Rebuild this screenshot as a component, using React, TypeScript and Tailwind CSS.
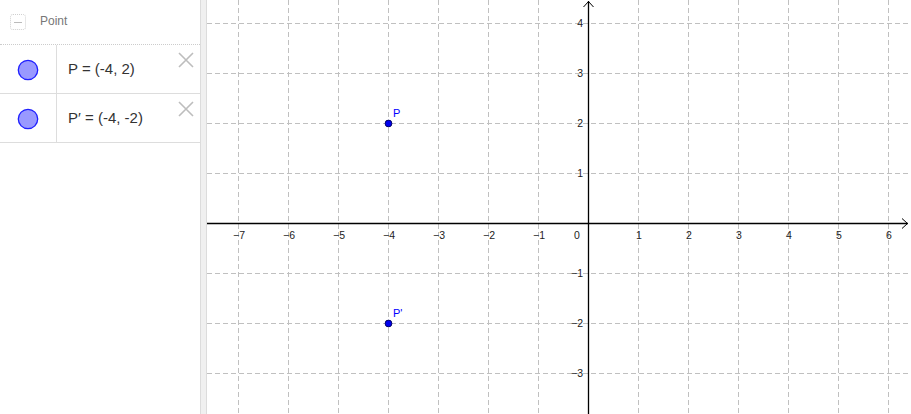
import React from "react";

const W = 704;
const H = 414;
const OX = 381; // origin x in svg coords (588 - 207)
const OY = 223;
const U = 50;

function Graph() {
  const xs: number[] = [];
  for (let k = -7; k <= 6; k++) xs.push(k);
  const ys: number[] = [];
  for (let k = -3; k <= 4; k++) ys.push(k);
  const lab = (n: number) => (n < 0 ? "\u2212" + Math.abs(n) : String(n));
  return (
    <svg width={W} height={H} viewBox={`0 0 ${W} ${H}`} className="block" style={{ fontFamily: "'Liberation Sans', Arial, sans-serif" }}>
      <rect x={0} y={0} width={W} height={H} fill="#ffffff" />
      {xs.filter((k) => k !== 0).map((k) => (
        <line key={"gx" + k} x1={OX + k * U + 0.5} y1={0} x2={OX + k * U + 0.5} y2={H} stroke="#c0c0c0" strokeWidth={1} strokeDasharray="5 3" />
      ))}
      {ys.filter((k) => k !== 0).map((k) => (
        <line key={"gy" + k} x1={0} y1={OY - k * U + 0.5} x2={W} y2={OY - k * U + 0.5} stroke="#c0c0c0" strokeWidth={1} strokeDasharray="5 3" />
      ))}
      {/* axes */}
      <line x1={0} y1={OY + 0.5} x2={W - 3} y2={OY + 0.5} stroke="#000" strokeWidth={1.3} />
      <line x1={OX + 0.5} y1={1} x2={OX + 0.5} y2={H} stroke="#000" strokeWidth={1.3} />
      <polyline points={`${W - 9},${OY - 4.5} ${W - 3.5},${OY + 0.5} ${W - 9},${OY + 5.5}`} fill="none" stroke="#000" strokeWidth={1} />
      <polyline points={`${OX - 4.5},${7} ${OX + 0.5},${1.5} ${OX + 5.5},${7}`} fill="none" stroke="#000" strokeWidth={1} />
      {/* x labels */}
      {xs.filter((k) => k !== 0).map((k) => (
        <text key={"lx" + k} x={OX + k * U + 1} y={OY + 16} fontSize={10.5} fill="#222" textAnchor="middle">
          {lab(k)}
        </text>
      ))}
      <text x={OX - 11} y={OY + 16} fontSize={10.5} fill="#222" textAnchor="middle">0</text>
      {/* y labels */}
      {ys.filter((k) => k !== 0).map((k) => (
        <text key={"ly" + k} x={OX - 5} y={OY - k * U + 4} fontSize={10.5} fill="#222" textAnchor="end">
          {lab(k)}
        </text>
      ))}
      {/* points */}
      <circle cx={OX - 4 * U + 0.5} cy={OY - 2 * U + 0.5} r={3.4} fill="#0000ee" stroke="#000055" strokeWidth={0.9} />
      <text x={OX - 4 * U + 5} y={OY - 2 * U - 6} fontSize={11} fill="#0000ff">P</text>
      <circle cx={OX - 4 * U + 0.5} cy={OY + 2 * U + 0.5} r={3.4} fill="#0000ee" stroke="#000055" strokeWidth={0.9} />
      <text x={OX - 4 * U + 5} y={OY + 2 * U - 6} fontSize={11} fill="#0000ff">P'</text>
    </svg>
  );
}

function XIcon() {
  return (
    <svg width="18" height="18" viewBox="0 0 18 18" className="block">
      <path d="M2 2 L16 16 M16 2 L2 16" stroke="#bdbdbd" strokeWidth="1.6" fill="none" />
    </svg>
  );
}

function Dot() {
  return (
    <svg width="22" height="22" viewBox="0 0 22 22" className="block">
      <circle cx="11" cy="11" r="9.7" fill="#9999ff" stroke="#1f1fff" strokeWidth="1.3" />
    </svg>
  );
}

function Row({ label }: { label: string }) {
  return (
    <div className="flex h-[49px] border-b border-[#dddddd]">
      <div className="w-[57px] flex items-center justify-center border-r border-[#dddddd] pt-[1px]">
        <Dot />
      </div>
      <div className="flex-1 relative flex items-center pl-[11px] text-[15px] text-[#333333] pt-[1px]">
        <span>{label}</span>
        <div className="absolute right-[5px] top-[6px]">
          <XIcon />
        </div>
      </div>
    </div>
  );
}

export default function App() {
  return (
    <div className="flex w-[911px] h-[414px] overflow-hidden bg-white" style={{ fontFamily: "'Liberation Sans', Arial, sans-serif" }}>
      <div className="w-[200px] flex flex-col bg-white">
        <div className="h-[45px] flex items-center border-b border-dotted border-[#cccccc]">
          <div className="ml-[10px] w-[16px] h-[16px] border border-dotted border-[#d0d0d0] rounded-[3px] flex items-center justify-center">
            <div className="w-[8px] h-[1px] bg-[#bbbbbb]" />
          </div>
          <span className="ml-[14px] text-[12px] text-[#777777] -mt-[2px]">Point</span>
        </div>
        <Row label="P = (-4, 2)" />
        <Row label={"P\u2032 = (-4, -2)"} />
      </div>
      <div className="w-[7px] bg-[#f0f0f0] border-l border-r border-[#dcdcdc]" />
      <Graph />
    </div>
  );
}
